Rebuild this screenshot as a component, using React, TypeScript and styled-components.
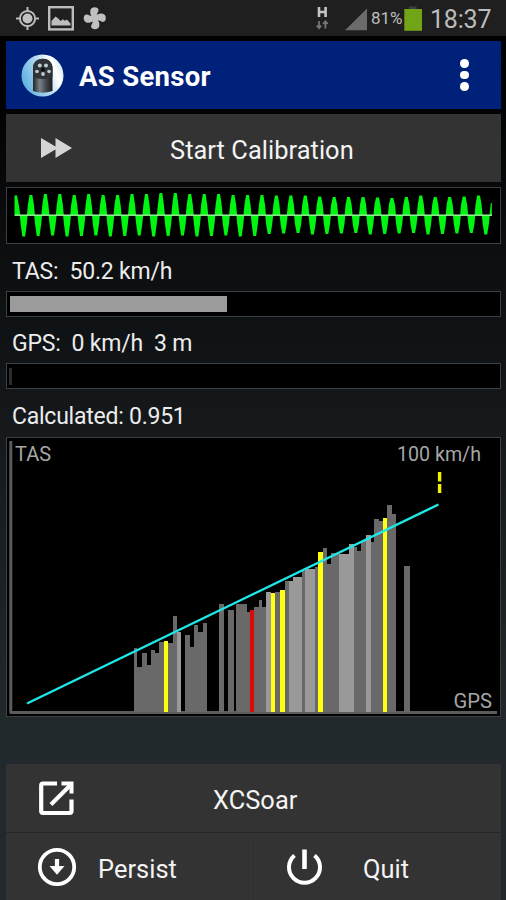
import React from "react";
import styled, { createGlobalStyle } from "styled-components";

const GlobalStyle = createGlobalStyle`
  * { box-sizing: border-box; }
  html, body { margin: 0; padding: 0; background: #000; }
  body { font-family: Roboto, "Liberation Sans", sans-serif; color: #f2f2f2; }
  svg { display: block; flex: none; }
`;

const Screen = styled.div`
  width: 506px;
  height: 900px;
  display: flex;
  flex-direction: column;
  overflow: hidden;
  background: linear-gradient(#000 36px, #020305 110px, #0c0e10 250px, #15191b 430px, #22292c 740px, #22282d 900px);
`;

const StatusBar = styled.div`
  display: flex;
  align-items: center;
  justify-content: space-between;
  height: 36px;
  flex: none;
  padding: 0 15px;
  background: #1f1f1f;
  color: #bdbdbd;
`;

const StatusGroup = styled.div`
  display: flex;
  align-items: center;
  height: 36px;
`;

const Percent = styled.span`
  width: 33px;
  margin-left: 4px;
  font-size: 17px;
  line-height: 38px;
  white-space: nowrap;
`;

const Clock = styled.span`
  width: 61px;
  margin-left: 8px;
  font-size: 25px;
  letter-spacing: -0.2px;
  line-height: 36px;
  padding-top: 4px;
  white-space: nowrap;
`;

const Content = styled.main`
  display: flex;
  flex-direction: column;
  flex: 1;
  padding: 5px 5px 0 6px;
`;

const Header = styled.header`
  display: flex;
  align-items: center;
  height: 68px;
  flex: none;
  padding: 0 31px 0 15px;
  background: #00217a;
`;

const Title = styled.h1`
  flex: 1;
  margin: 4px 0 0 15px;
  font-size: 27.5px;
  font-weight: 700;
  letter-spacing: 0.3px;
  line-height: 34px;
  color: #fff;
`;

const Dots = styled.div`
  display: flex;
  flex-direction: column;
  gap: 3px;
  margin-right: 1px;
`;

const Dot = styled.i`
  width: 8.6px;
  height: 8.6px;
  border-radius: 50%;
  background: #fff;
`;

const Button = styled.button<{ $height: number; $labelLeft: number }>`
  display: grid;
  grid-template-columns: ${(p) => p.$labelLeft}px auto;
  align-items: center;
  justify-content: start;
  height: ${(p) => p.$height}px;
  width: 100%;
  padding: 0;
  border: 0;
  background: #333;
  color: #f4f4f4;
  font: 400 25.4px/32px Roboto, "Liberation Sans", sans-serif;
  letter-spacing: 0.05px;
  text-align: left;
  white-space: nowrap;
`;

const ButtonIcon = styled.span<{ $left: number }>`
  padding-left: ${(p) => p.$left}px;
`;

const ButtonLabel = styled.span`
  padding-top: 4px;
`;

const CalibrationRow = styled.div`
  margin-top: 5px;
`;

const Panel = styled.div<{ $height: number; $top?: number }>`
  height: ${(p) => p.$height}px;
  flex: none;
  margin-top: ${(p) => p.$top ?? 0}px;
  border: 1.5px solid #3d4042;
  background: #000;
`;

const Reading = styled.div<{ $height: number; $spacing: number }>`
  height: ${(p) => p.$height}px;
  flex: none;
  padding: 8px 0 0 6px;
  font-size: 23px;
  line-height: ${(p) => p.$height - 8}px;
  letter-spacing: ${(p) => p.$spacing}px;
  color: #ececec;
  white-space: pre;
`;

const Level = styled.div<{ $width: number; $dim?: boolean }>`
  width: ${(p) => p.$width}px;
  height: ${(p) => (p.$dim ? 17 : 16)}px;
  margin: ${(p) => (p.$dim ? "4px 0 0 2px" : "4px 0 0 3px")};
  background: ${(p) => (p.$dim ? "#2b2b2b" : "#9b9b9b")};
`;

const Actions = styled.footer`
  display: flex;
  flex-direction: column;
  margin-top: auto;
`;

const ActionPair = styled.div`
  display: grid;
  grid-template-columns: 247px 247px;
  gap: 1px;
  margin-top: 1px;
  background: #2d2f30;
`;

const GRAY = "#696969";
const LIGHT = "#999999";
const YELLOW = "#ffff12";
const RED = "#df0808";

// Each bar: left edge, right edge, top edge, fill.
const bars: [number, number, number, string][] = [
  [134, 137.3, 648, GRAY], [137.3, 142, 667, GRAY], [142, 146.7, 653, GRAY],
  [146.7, 150.7, 665, GRAY], [150.7, 155, 650, GRAY], [155, 159.3, 653, GRAY],
  [159.3, 164, 642, GRAY], [164, 168.3, 640.5, YELLOW], [168.3, 172.7, 643, GRAY],
  [172.7, 177.3, 616, GRAY], [177.3, 181, 632, LIGHT], [185, 190, 635, GRAY],
  [190, 194, 647, GRAY], [194, 198.3, 625, GRAY], [198.3, 202.7, 632, GRAY],
  [202.7, 206.7, 623, GRAY], [218.7, 224, 603.5, GRAY], [228.3, 233.7, 609.5, GRAY],
  [236.3, 246.7, 603.8, GRAY], [246.7, 249.7, 611.5, GRAY], [249.7, 254, 610, RED],
  [254, 258.7, 607, GRAY], [258.7, 262.3, 599.5, GRAY], [262.3, 266, 606.5, GRAY],
  [266, 270.7, 591.5, LIGHT], [270.7, 275.3, 592.5, YELLOW], [275.3, 279.7, 592, GRAY],
  [279.7, 285, 589.5, YELLOW], [285, 288.7, 581, GRAY], [288.7, 293, 580.5, LIGHT],
  [293, 302, 577, LIGHT], [302, 304.7, 570.5, GRAY], [304.7, 315, 569, LIGHT],
  [315, 317.7, 567, GRAY], [317.7, 323.3, 551.5, YELLOW], [323.3, 327, 547.5, GRAY],
  [327, 331, 564, GRAY], [331, 339.3, 552.5, GRAY], [339.3, 348.7, 554, LIGHT],
  [348.7, 353.5, 544, LIGHT], [353.5, 357, 547, GRAY], [357, 361.3, 550.5, GRAY],
  [361.3, 366, 541, GRAY], [366, 370.7, 535, LIGHT], [370.7, 374, 542, GRAY],
  [374, 379, 519, GRAY], [379, 383.3, 520.5, GRAY], [383.3, 387.3, 517.5, YELLOW],
  [387.3, 392, 504.5, GRAY], [392, 396, 514, GRAY], [404, 409.7, 566, GRAY],
];

const peaks = [20, 21, 21, 20, 21, 20, 20, 21, 21, 22, 22, 21, 21, 21, 20, 20, 20, 19.5, 19.5, 19.5, 18.5, 18, 18, 18, 17.5, 17, 18, 19.5, 18, 18, 18.5, 19.5];

function wavePath(): string {
  let d = "M15 215.5V196H17.6L19.4 206L20.8 215.5Z";
  const pitch = 14.44;
  for (let i = 0; i < 33; i++) {
    const t = 24.2 + i * pitch;
    const h = i < 17 ? 21.5 - (i % 3) * 0.5 : 19.5 - (i % 4) * 0.5;
    d += `M${t - 4} 215.5L${t - 3} 225L${t - 1.4} ${215.5 + h}H${t + 1.4}L${t + 3} 225L${t + 4} 215.5Z`;
    if (i < 32) {
      const p = t + pitch / 2;
      const k = 215.5 - peaks[i];
      d += `M${p - 4} 215.5L${p - 3} 205L${p - 1.4} ${k}H${p + 1.4}L${p + 3} 205L${p + 4} 215.5Z`;
    }
  }
  return d + "M490 215.5L491.3 203.5H492.3V215.5Z";
}

const Waveform = () => (
  <svg width="492" height="54" viewBox="7.5 188.5 492 54">
    <path d={wavePath()} fill="#00f510" />
    <rect x="15" y="215" width="477.5" height="1.4" fill="#9df69d" />
  </svg>
);

const Chart = () => (
  <svg width="492" height="278" viewBox="7 438 492 278" fontFamily='Roboto, "Liberation Sans", sans-serif' fontSize="20" fill="#a6a6a6">
    <path d="M10.8 441V712.4H497" fill="none" stroke="#5b5b5b" strokeWidth="3" strokeLinejoin="round" />
    {bars.map(([x, right, y, fill], i) => (
      <rect key={i} x={x} y={y} width={right - x} height={712 - y} fill={fill} shapeRendering="crispEdges" />
    ))}
    <path d="M27 703.5L438.5 504.5" stroke="#1ee8e8" strokeWidth="2.4" />
    <path d="M439.6 472V481.5M439.6 484V493" stroke="#f1f100" strokeWidth="3.4" />
    <text x="15" y="461" textLength="36" lengthAdjust="spacingAndGlyphs">TAS</text>
    <text x="397" y="461" textLength="84" lengthAdjust="spacingAndGlyphs">100 km/h</text>
    <text x="453.5" y="708" textLength="38.5" lengthAdjust="spacingAndGlyphs">GPS</text>
  </svg>
);

const NoticeIcons = () => (
  <svg width="94" height="30" viewBox="15 3 94 30" fill="none" stroke="#bcbcbc">
    <circle cx="27.5" cy="18.5" r="7.6" strokeWidth="2" />
    <circle cx="27.5" cy="18.5" r="5" fill="#c2c2c2" stroke="none" />
    <path d="M27.5 7v4M27.5 26v4M16 18.5h4M35 18.5h4" strokeWidth="2" />
    <rect x="49.2" y="7.2" width="23.6" height="22.2" strokeWidth="2.4" />
    <path d="M51.5 25.5V21l4-4.5 2.2 1.6 3 3 2.2-1.8 2 1.5 2-1.2 3.6 4v1.9z" fill="#bcbcbc" stroke="none" />
    <g fill="#c0c0c0" stroke="none" transform="translate(94.8 18.2)">
      {[0, 90, 180, 270].map((a) => (
        <path key={a} transform={`rotate(${a})`} d="M-1.8 1C-3.2-2-5.2-4.5-4.5-7.8C-3.8-11 0-11.8 2.6-10.3C4.4-9 3.7-6.8 2.6-5.2C1.8-3.6 1.8-1.8 2 0Z" />
      ))}
      <circle r="2.4" />
    </g>
  </svg>
);

const SignalIcon = () => (
  <svg width="52" height="30" viewBox="314 3 52 30">
    <path d="M318 7V17M324.6 7V17M318 12H324.6" fill="none" stroke="#c4c4c4" strokeWidth="2.6" />
    <path d="M318 21V28M315.7 25.5L318 28.2L320.3 25.5M324.4 28.5V21.5M322.1 24L324.4 21.3L326.7 24" fill="none" stroke="#777" strokeWidth="1.8" />
    <path d="M344 30.3L366 8.5V30.3Z" fill="#6b6b6b" />
  </svg>
);

const BatteryIcon = () => (
  <svg width="18" height="30" viewBox="404 3 18 30">
    <path d="M409 9V6.3H416.5V9Z" fill="#3c3c3c" />
    <rect x="404.3" y="9" width="17.7" height="21.8" fill="#71a417" />
  </svg>
);

const SensorLogo = () => (
  <svg width="43" height="43" viewBox="0 0 43 43">
    <defs>
      <linearGradient id="sky" x1="0" y1="0.7" x2="1" y2="0.3">
        <stop offset="0" stopColor="#5aaee0" />
        <stop offset="0.45" stopColor="#a7d4ef" />
        <stop offset="0.8" stopColor="#fff" />
        <stop offset="1" stopColor="#d6e9f6" />
      </linearGradient>
      <linearGradient id="metal">
        <stop offset="0" stopColor="#202329" />
        <stop offset="0.35" stopColor="#7c8088" />
        <stop offset="0.65" stopColor="#454951" />
        <stop offset="1" stopColor="#181b20" />
      </linearGradient>
    </defs>
    <circle cx="21.5" cy="21.5" r="21" fill="url(#sky)" />
    <path d="M12 37V14C12 1.5 31.5 1.5 31.5 14V37Q21.5 40.5 12 37Z" fill="url(#metal)" />
    <path d="M12 23V14C12 1.5 31.5 1.5 31.5 14V23Q21.5 27 12 23Z" fill="#303336" />
    <g fill="#bdcbd3">
      <circle cx="18.8" cy="11.5" r="2" />
      <circle cx="25" cy="11.5" r="2" />
      <circle cx="16" cy="17.5" r="1.8" />
      <circle cx="28" cy="17.5" r="1.8" />
      <circle cx="22" cy="20" r="1.9" />
    </g>
    <circle cx="22" cy="15.5" r="2" fill="#0b0d10" />
  </svg>
);

const ForwardIcon = () => (
  <svg width="32" height="20" viewBox="0 0 32 20" fill="#d5d5d5">
    <path d="M0 0L17 10L0 20ZM14.5 0L31 10L14.5 20Z" />
  </svg>
);

const OpenIcon = () => (
  <svg width="38" height="38" viewBox="0 0 38 38" fill="none" stroke="#fff" strokeWidth="4.2">
    <path d="M19 4.5H5Q3.2 4.5 3.2 6.5V32Q3.2 34 5 34H31.5Q33.5 34 33.5 32V20.5" />
    <path d="M13 25.5L32.5 6" strokeWidth="4" />
    <path d="M23.5 4.5H33.5V14.5" strokeWidth="4" />
  </svg>
);

const PersistIcon = () => (
  <svg width="40" height="40" viewBox="0 0 40 40" fill="none" stroke="#fff">
    <circle cx="20" cy="20" r="17.2" strokeWidth="3.8" />
    <path d="M20 12V22" strokeWidth="4.2" />
    <path d="M12.5 19H27.5L20 27.8Z" fill="#fff" stroke="none" />
  </svg>
);

const PowerIcon = () => (
  <svg width="38" height="38" viewBox="0 0 38 38" fill="none" stroke="#fff" strokeWidth="4">
    <path d="M8.5 7.5A15.5 15.5 0 1 0 28.5 7.5" />
    <path d="M18.5 1.5V21" strokeWidth="4.6" />
  </svg>
);

export default function App() {
  return (
    <>
      <GlobalStyle />
      <Screen>
        <StatusBar>
          <StatusGroup>
            <NoticeIcons />
          </StatusGroup>
          <StatusGroup>
            <SignalIcon />
            <Percent>81%</Percent>
            <BatteryIcon />
            <Clock>18:37</Clock>
          </StatusGroup>
        </StatusBar>
        <Content>
          <Header>
            <SensorLogo />
            <Title>AS Sensor</Title>
            <Dots>
              <Dot />
              <Dot />
              <Dot />
            </Dots>
          </Header>
          <CalibrationRow>
            <Button $height={68} $labelLeft={164}>
              <ButtonIcon $left={35}><ForwardIcon /></ButtonIcon>
              <ButtonLabel>Start Calibration</ButtonLabel>
            </Button>
          </CalibrationRow>
          <Panel $height={57} $top={5}><Waveform /></Panel>
          <Reading $height={47} $spacing={-0.18}>TAS:  50.2 km/h</Reading>
          <Panel $height={26}><Level $width={217} /></Panel>
          <Reading $height={46} $spacing={-0.2}>GPS:  0 km/h  3 m</Reading>
          <Panel $height={26}><Level $width={3} $dim /></Panel>
          <Reading $height={48} $spacing={-0.24}>Calculated: 0.951</Reading>
          <Panel $height={280}><Chart /></Panel>
          <Actions>
            <Button $height={68} $labelLeft={207}>
              <ButtonIcon $left={32}><OpenIcon /></ButtonIcon>
              <ButtonLabel>XCSoar</ButtonLabel>
            </Button>
            <ActionPair>
              <Button $height={67} $labelLeft={92}>
                <ButtonIcon $left={31}><PersistIcon /></ButtonIcon>
                <ButtonLabel>Persist</ButtonLabel>
              </Button>
              <Button $height={67} $labelLeft={109}>
                <ButtonIcon $left={32}><PowerIcon /></ButtonIcon>
                <ButtonLabel>Quit</ButtonLabel>
              </Button>
            </ActionPair>
          </Actions>
        </Content>
      </Screen>
    </>
  );
}
